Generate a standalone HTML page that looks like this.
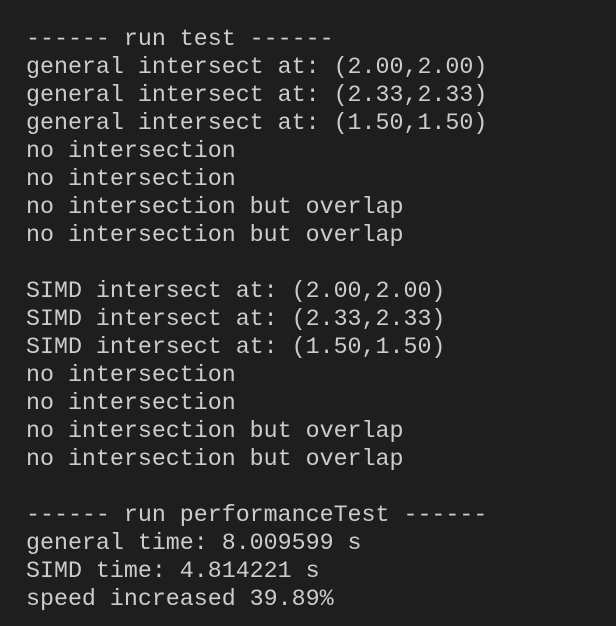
<!DOCTYPE html>
<html><head><style>
html,body{margin:0;padding:0;background:#1e1e1e;width:616px;height:626px;overflow:hidden}
pre{margin:0;position:absolute;left:26px;top:25px;font-family:"Liberation Mono",monospace;font-size:23.3px;line-height:28px;color:#cccccc}
</style></head><body>
<pre>------ run test ------
general intersect at: (2.00,2.00)
general intersect at: (2.33,2.33)
general intersect at: (1.50,1.50)
no intersection
no intersection
no intersection but overlap
no intersection but overlap

SIMD intersect at: (2.00,2.00)
SIMD intersect at: (2.33,2.33)
SIMD intersect at: (1.50,1.50)
no intersection
no intersection
no intersection but overlap
no intersection but overlap

------ run performanceTest ------
general time: 8.009599 s
SIMD time: 4.814221 s
speed increased 39.89%</pre>
</body></html>
